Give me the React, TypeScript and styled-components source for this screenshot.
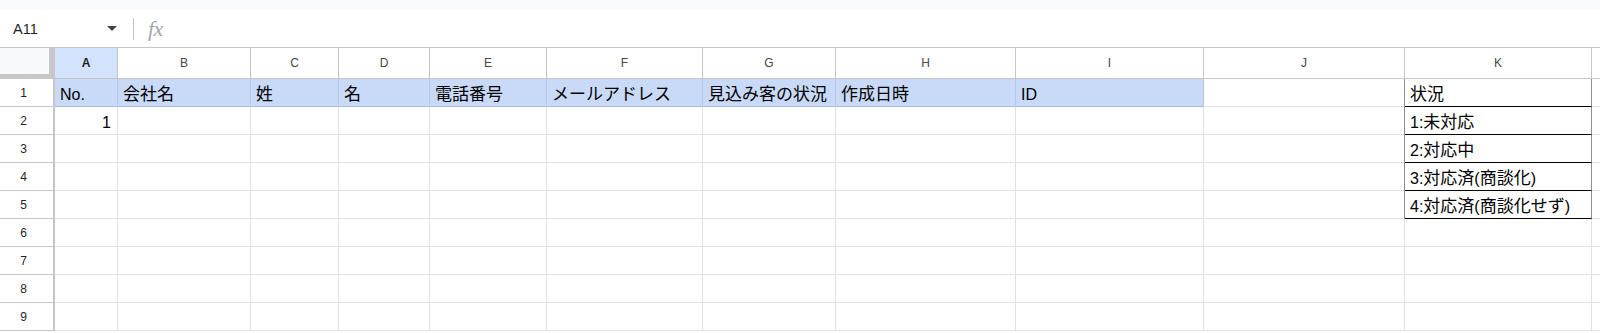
import styled, { createGlobalStyle } from "styled-components";

const GlobalStyle = createGlobalStyle`
  html, body {
    margin: 0;
    height: 100%;
    overflow: hidden;
  }
  body {
    background: #ffffff;
    font-family: "Liberation Sans", Arial, "Noto Sans CJK JP", sans-serif;
  }
`;

const COLUMNS = ["A", "B", "C", "D", "E", "F", "G", "H", "I", "J", "K", ""];
const WIDTHS = [55, 63, 133, 88, 91, 117, 156, 133, 180, 188, 201, 187];

type CellData = { text?: string; right?: boolean };

const empty = (): CellData[] => Array.from({ length: 12 }, () => ({}));
const withStatus = (status: string, first: CellData = {}): CellData[] => {
  const row = empty();
  row[0] = first;
  row[10] = { text: status };
  return row;
};

// rows of A..L
const ROWS: CellData[][] = [
  [
    { text: "No." },
    { text: "会社名" },
    { text: "姓" },
    { text: "名" },
    { text: "電話番号" },
    { text: "メールアドレス" },
    { text: "見込み客の状況" },
    { text: "作成日時" },
    { text: "ID" },
    {},
    { text: "状況" },
    {},
  ],
  withStatus("1:未対応", { text: "1", right: true }),
  withStatus("2:対応中"),
  withStatus("3:対応済(商談化)"),
  withStatus("4:対応済(商談化せず)"),
  empty(),
  empty(),
  empty(),
  empty(),
];

const FILLED_COLS = 9; // A..I blue in row 1
const STATUS_COL = 10; // K
const STATUS_ROWS = 5;

const Page = styled.div`
  height: 333px;
  overflow: hidden;
`;

const TopStrip = styled.div`
  height: 10px;
  background: #f9fbfd;
`;

const FormulaBar = styled.div`
  height: 37px;
  display: flex;
  align-items: center;
  background: #ffffff;
`;

const NameBox = styled.div`
  width: 120px;
  display: flex;
  align-items: center;
  justify-content: space-between;
  padding: 0 3px 0 13px;
  box-sizing: border-box;
  font-size: 14.5px;
  color: #1f1f1f;
`;

const Divider = styled.div`
  width: 1px;
  height: 22px;
  background: #c4c7c5;
  margin: 0 14px 0 13px;
`;

const Fx = styled.span`
  font-family: "Liberation Serif", serif;
  font-style: italic;
  font-size: 22px;
  color: #a3a7ab;
  letter-spacing: -0.5px;
`;

const Sheet = styled.div`
  display: grid;
  grid-template-columns: ${WIDTHS.map((w) => w + "px").join(" ")} 1fr;
  grid-template-rows: 31px;
  grid-auto-rows: 28px;
  border-top: 1px solid #c4c7c5;
`;

const Corner = styled.div`
  background: #f8f9fa;
  border-right: 6px solid #c7c7c7;
  border-bottom: 5px solid #c7c7c7;
`;

const ColHeader = styled.div<{ $active?: boolean }>`
  display: flex;
  align-items: center;
  justify-content: center;
  font-size: 12px;
  color: ${(p) => (p.$active ? "#1f1f1f" : "#444746")};
  font-weight: ${(p) => (p.$active ? 700 : 400)};
  background: ${(p) => (p.$active ? "#d3e3fd" : "#ffffff")};
  border-right: 1px solid #c4c7c5;
  border-bottom: 1px solid #c4c7c5;
`;

const RowHeader = styled.div`
  display: flex;
  align-items: center;
  justify-content: center;
  padding-right: 6px;
  font-size: 12px;
  color: #1f1f1f;
  border-right: 2px solid #c4c7c5;
  border-bottom: 1px solid #c4c7c5;
`;

const Cell = styled.div<{ $fill?: boolean; $right?: boolean; $status?: boolean }>`
  display: flex;
  align-items: flex-end;
  justify-content: ${(p) => (p.$right ? "flex-end" : "flex-start")};
  padding: 0 6px 1px 5px;
  overflow: hidden;
  white-space: nowrap;
  font-size: 16px;
  line-height: 20px;
  color: #000000;
  background: ${(p) => (p.$fill ? "#c9daf8" : "#ffffff")};
  border-right: 1px solid
    ${(p) => (p.$status ? "#8f8f8f" : p.$fill ? "#b4c7ea" : "#e1e1e1")};
  border-bottom: 1px solid
    ${(p) => (p.$status ? "#000000" : p.$fill ? "#a9bde4" : "#e1e1e1")};
  box-shadow: ${(p) => (p.$status ? "-1px 0 0 #8f8f8f" : "none")};
`;

// the Japanese glyphs render a touch larger than the Latin ones in the sheet
const Jp = styled.span`
  font-size: 17px;
`;

const CellText = ({ text }: { text: string }) => (
  <span>
    {text
      .split(/([\u3000-\u9fff\uff00-\uffef]+)/)
      .filter(Boolean)
      .map((part, i) =>
        /[\u3000-\u9fff\uff00-\uffef]/.test(part) ? <Jp key={i}>{part}</Jp> : part
      )}
  </span>
);

const Caret = () => (
  <svg width="10" height="5" viewBox="0 0 10 5">
    <path d="M0 0 L10 0 L5 5 Z" fill="#444746" />
  </svg>
);

export default function App() {
  return (
    <Page>
      <GlobalStyle />
      <TopStrip />
      <FormulaBar>
        <NameBox>
          <span>A11</span>
          <Caret />
        </NameBox>
        <Divider />
        <Fx>fx</Fx>
      </FormulaBar>
      <Sheet>
        <Corner />
        {COLUMNS.map((c, i) => (
          <ColHeader key={"h" + i} $active={c === "A"}>
            {c}
          </ColHeader>
        ))}
        {ROWS.map((row, r) => (
          <RowCells key={r} index={r} row={row} />
        ))}
      </Sheet>
    </Page>
  );
}

function RowCells({ index, row }: { index: number; row: CellData[] }) {
  return (
    <>
      <RowHeader>{index + 1}</RowHeader>
      {row.map((cell, c) => (
        <Cell
          key={c}
          $fill={index === 0 && c < FILLED_COLS}
          $right={cell.right}
          $status={c === STATUS_COL && index < STATUS_ROWS}
        >
          {cell.text && <CellText text={cell.text} />}
        </Cell>
      ))}
    </>
  );
}
